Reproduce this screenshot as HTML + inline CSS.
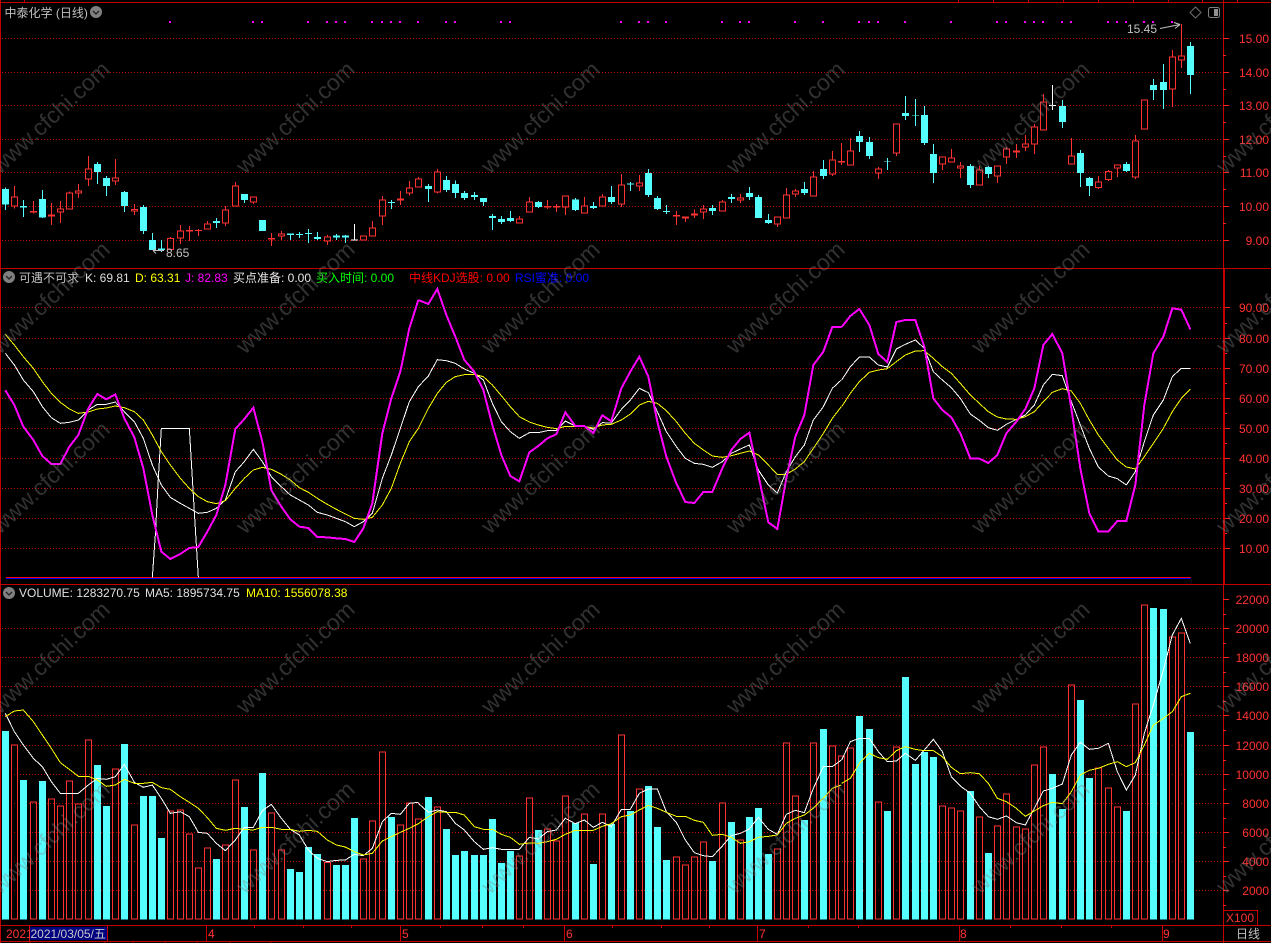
<!DOCTYPE html>
<html><head><meta charset="utf-8"><title>中泰化学</title>
<style>
html,body{margin:0;padding:0;background:#000;width:1271px;height:943px;overflow:hidden}
svg{display:block}
text{font-family:"Liberation Sans","WenQuanYi Zen Hei","Noto Sans CJK SC",sans-serif;font-size:12px}
.w text{font-size:23px}
</style></head><body>
<svg width="1271" height="943" viewBox="0 0 1271 943" xmlns="http://www.w3.org/2000/svg">
<rect width="1271" height="943" fill="#000"/>
<!-- grid -->
<path shape-rendering="crispEdges" stroke="#b80000" stroke-width="1" stroke-dasharray="1 2" fill="none" d="M2 38.5H1223M2 72.5H1223M2 105.5H1223M2 139.5H1223M2 172.5H1223M2 206.5H1223M2 240.5H1223M2 307.5H1223M2 338.5H1223M2 368.5H1223M2 398.5H1223M2 428.5H1223M2 458.5H1223M2 488.5H1223M2 518.5H1223M2 548.5H1223M2 628.5H1223M2 657.5H1223M2 686.5H1223M2 715.5H1223M2 745.5H1223M2 774.5H1223M2 803.5H1223M2 832.5H1223M2 861.5H1223M2 890.5H1223"/>
<!-- frame -->
<path shape-rendering="crispEdges" stroke="#c40000" stroke-width="1" fill="none" d="M0 2.5H1271M0 268.5H1271M0 584.5H1271M0 925.5H1271M0 941.5H1271M0.5 0V943M1223.5 0V943M24.5 0V2M958.5 0V2M993.5 0V2M1028.5 0V2M1063.5 0V2M1098.5 0V2M1133.5 0V2M1168.5 0V2M1202.5 0V2M1237.5 0V2M1224.5 269V584M29.5 926V941M107.5 926V941M206.5 926V941M400.5 926V941M564.5 926V941M757.5 926V941M959.5 926V941M1162.5 926V941M254.5 926V928M303.5 926V928M351.5 926V928M440.5 926V928M482.5 926V928M523.5 926V928M612.5 926V928M661.5 926V928M709.5 926V928M808.5 926V928M858.5 926V928M1010.5 926V928M1061.5 926V928M1111.5 926V928M1223 910.5H1257M1257.5 910V925M30 941V943M105 941V943M133 941V943M165 941V943M197 941V943M230 941V943M271 941V943"/>
<!-- axis ticks -->
<path shape-rendering="crispEdges" stroke="#ff2020" stroke-width="1" fill="none" d="M1223 38.5h6M1223 72.5h6M1223 105.5h6M1223 139.5h6M1223 172.5h6M1223 206.5h6M1223 240.5h6M1223 55.5h3M1223 89.5h3M1223 122.5h3M1223 156.5h3M1223 189.5h3M1223 223.5h3M1225 307.5h5M1225 338.5h5M1225 368.5h5M1225 398.5h5M1225 428.5h5M1225 458.5h5M1225 488.5h5M1225 518.5h5M1225 548.5h5M1225 323.5h2M1225 353.5h2M1225 383.5h2M1225 413.5h2M1225 443.5h2M1225 473.5h2M1225 503.5h2M1225 533.5h2M1223 599.5h6M1223 628.5h6M1223 657.5h6M1223 686.5h6M1223 715.5h6M1223 745.5h6M1223 774.5h6M1223 803.5h6M1223 832.5h6M1223 861.5h6M1223 890.5h6M1223 614.5h3M1223 643.5h3M1223 672.5h3M1223 701.5h3M1223 730.5h3M1223 760.5h3M1223 789.5h3M1223 818.5h3M1223 847.5h3M1223 876.5h3M1223 905.5h3"/>
<!-- signal dots -->
<path shape-rendering="crispEdges" fill="#ff00ff" d="M169 21h2v2h-2zM252 21h2v2h-2zM261 21h2v2h-2zM307 21h2v2h-2zM326 21h2v2h-2zM335 21h2v2h-2zM344 21h2v2h-2zM371 21h2v2h-2zM381 21h2v2h-2zM390 21h2v2h-2zM399 21h2v2h-2zM417 21h2v2h-2zM445 21h2v2h-2zM454 21h2v2h-2zM500 21h2v2h-2zM509 21h2v2h-2zM620 21h2v2h-2zM638 21h2v2h-2zM647 21h2v2h-2zM665 21h2v2h-2zM721 21h2v2h-2zM739 21h2v2h-2zM748 21h2v2h-2zM794 21h2v2h-2zM822 21h2v2h-2zM858 21h2v2h-2zM868 21h2v2h-2zM877 21h2v2h-2zM904 21h2v2h-2zM950 21h2v2h-2zM996 21h2v2h-2zM1005 21h2v2h-2zM1024 21h2v2h-2zM1033 21h2v2h-2zM1042 21h2v2h-2zM1061 21h2v2h-2zM1070 21h2v2h-2zM1107 21h2v2h-2zM1116 21h2v2h-2zM1125 21h2v2h-2zM1143 21h2v2h-2zM1152 21h2v2h-2zM1171 21h2v2h-2z"/>

<!-- candles panel A -->
<g transform="scale(.33333)" shape-rendering="crispEdges">
<path stroke="#55ffff" stroke-width="3" fill="none" d="M16.5 563V630M70.5 600V651M127.5 570V654M292.5 486V552M319.5 528V588M373.5 573V636M430.5 615V702M457.5 699V750M484.5 720V756M649.5 654V684M733.5 582V609M871.5 700V720M898.5 696V714M925.5 687V729M952.5 696V720M1009.5 702V720M1036.5 705V729M1174.5 600V627"/>
<path fill="#55ffff" d="M6 567h21v47h-21zM60 618h21v5h-21zM117 597h21v55h-21zM282 492h21v24h-21zM309 534h21v24h-21zM363 576h21v42h-21zM420 621h21v72h-21zM447 720h21v30h-21zM474 745h21v5h-21zM639 663h21v6h-21zM723 582h21v18h-21zM777 660h21v33h-21zM861 700h21v5h-21zM888 702h21v3h-21zM915 699h21v3h-21zM942 711h21v6h-21zM999 707h21v6h-21zM1026 707h21v6h-21zM1164 606h21v3h-21z"/>
<path stroke="#ff3232" stroke-width="3" fill="none" d="M43.5 558V589M43.5 620V626M34.5 590.5h18v28h-18zM100.5 603V640M91.5 634.5h18v2h-18zM154.5 609V643M154.5 650V675M145.5 644.5h18v4h-18zM181.5 603V625M181.5 638V669M172.5 626.5h18v10h-18zM208.5 574V577M199.5 578.5h18v49h-18zM235.5 552V571M235.5 581V594M226.5 572.5h18v7h-18zM265.5 468V505M265.5 539V558M256.5 506.5h18v31h-18zM346.5 477V532M346.5 545V555M337.5 533.5h18v10h-18zM403.5 612V627M403.5 635V645M394.5 628.5h18v5h-18zM511.5 711V714M502.5 715.5h18v33h-18zM541.5 675V691M541.5 716V732M532.5 692.5h18v22h-18zM568.5 678V723M559.5 691.5h18v2h-18zM595.5 687V708M586.5 691h18v1h-18zM622.5 663V670M613.5 671.5h18v16h-18zM676.5 618V628M676.5 671V678M667.5 629.5h18v40h-18zM706.5 546V556M697.5 557.5h18v61h-18zM760.5 608V612M751.5 590.5h18v16h-18zM814.5 699V738M805.5 715.5h18v2h-18zM844.5 693V700M844.5 710V720M835.5 701.5h18v7h-18zM982.5 705V709M982.5 725V735M973.5 710.5h18v13h-18zM1081.5 707.5h18v13h-18zM1117.5 663V682M1108.5 683.5h18v25h-18zM1147.5 588V598M1147.5 650V675M1138.5 599.5h18v49h-18zM1201.5 573V595M1201.5 602V615M1192.5 596.5h18v4h-18zM1228.5 543V562M1228.5 581V587M1219.5 563.5h18v16h-18zM1255.5 531V535M1246.5 536.5h18v25h-18z"/>
<path stroke="#fff" stroke-width="3" fill="none" d="M1063.5 672V722M1053 720.5h21"/>
</g>
<!-- candles panel B -->
<g transform="translate(420,0) scale(.33333)" shape-rendering="crispEdges">
<path stroke="#55ffff" stroke-width="3" fill="none" d="M25.5 552V606M79.5 528V576M106.5 541V594M133.5 573V600M163.5 576V600M190.5 594V618M217.5 642V690M244.5 648V672M271.5 633V666M355.5 603V624M466.5 594V633M520.5 606V627M574.5 558V612M631.5 546V573M685.5 507V591M712.5 588V630M739.5 615V642M877.5 615V645M934.5 582V609M988.5 561V600M1015.5 585V654M1045.5 642V672M1153.5 546V585M1210.5 480V537"/>
<path fill="#55ffff" d="M15 558h21v9h-21zM69 540h21v30h-21zM96 552h21v27h-21zM123 579h21v15h-21zM153 585h21v6h-21zM180 594h21v12h-21zM207 648h21v6h-21zM234 657h21v9h-21zM261 654h21v9h-21zM345 606h21v15h-21zM456 598h21v32h-21zM510 618h21v6h-21zM564 591h21v15h-21zM621 550h21v3h-21zM675 519h21v66h-21zM702 594h21v33h-21zM729 633h21v3h-21zM867 624h21v9h-21zM924 591h21v6h-21zM978 579h21v12h-21zM1005 591h21v63h-21zM1035 660h21v9h-21zM1143 567h21v12h-21zM1200 507h21v21h-21z"/>
<path stroke="#ff3232" stroke-width="3" fill="none" d="M52.5 507V514M52.5 578V581M43.5 515.5h18v61h-18zM298.5 648V655M289.5 656.5h18v12h-18zM328.5 591V604M319.5 605.5h18v31h-18zM382.5 600V627M373.5 619.5h18v2h-18zM409.5 612V636M400.5 619.5h18v2h-18zM436.5 623V645M427.5 587.5h18v34h-18zM493.5 591V616M484.5 617.5h18v22h-18zM547.5 582V589M538.5 590.5h18v28h-18zM604.5 522V553M604.5 614V621M595.5 554.5h18v58h-18zM658.5 525V547M658.5 560V573M649.5 548.5h18v10h-18zM769.5 633V675M760.5 646.5h18v2h-18zM796.5 656V666M787.5 650.5h18v4h-18zM823.5 628V640M823.5 647V654M814.5 641.5h18v4h-18zM850.5 615V625M850.5 638V657M841.5 626.5h18v10h-18zM907.5 600V604M898.5 605.5h18v28h-18zM961.5 582V592M961.5 602V609M952.5 593.5h18v7h-18zM1072.5 674V681M1063.5 650.5h18v22h-18zM1099.5 564V583M1090.5 584.5h18v70h-18zM1126.5 567V571M1126.5 584V591M1117.5 572.5h18v10h-18zM1180.5 513V529M1171.5 530.5h18v58h-18zM1237.5 453V478M1237.5 524V528M1228.5 479.5h18v43h-18zM1264.5 429V495M1255.5 484.5h18v2h-18z"/>
</g>
<!-- candles panel C -->
<g transform="translate(840,0) scale(.33333)" shape-rendering="crispEdges">
<path stroke="#55ffff" stroke-width="3" fill="none" d="M58.5 393V456M88.5 411V477M142.5 474V510M196.5 288V360M226.5 297V378M253.5 318V435M280.5 432V549M391.5 492V564M445.5 498V534M667.5 300V384M721.5 450V561M748.5 531V588M859.5 486V516M940.5 237V300M970.5 192V327M1051.5 126V282"/>
<path fill="#55ffff" d="M48 408h21v18h-21zM78 426h21v42h-21zM132 483h21v2h-21zM186 339h21v9h-21zM216 345h21v2h-21zM243 345h21v84h-21zM270 462h21v57h-21zM381 498h21v57h-21zM435 501h21v21h-21zM657 318h21v48h-21zM711 459h21v60h-21zM738 534h21v24h-21zM849 492h21v21h-21zM930 255h21v15h-21zM960 246h21v24h-21zM1041 138h21v87h-21z"/>
<path stroke="#ff3232" stroke-width="3" fill="none" d="M31.5 414V451M22.5 452.5h18v43h-18zM115.5 501V505M115.5 520V537M106.5 506.5h18v12h-18zM169.5 461V468M160.5 371.5h18v88h-18zM307.5 494V510M298.5 470.5h18v22h-18zM334.5 447V472M325.5 473.5h18v13h-18zM361.5 486V496M361.5 506V534M352.5 497.5h18v7h-18zM418.5 498V508M409.5 509.5h18v45h-18zM472.5 529V549M463.5 497.5h18v30h-18zM499.5 441V445M499.5 473V492M490.5 446.5h18v25h-18zM529.5 432V474M520.5 452.5h18v4h-18zM556.5 405V430M556.5 443V453M547.5 431.5h18v10h-18zM583.5 372V379M583.5 433V462M574.5 380.5h18v51h-18zM610.5 282V304M601.5 305.5h18v85h-18zM694.5 414V466M685.5 467.5h18v25h-18zM775.5 528V544M775.5 564V567M766.5 545.5h18v17h-18zM805.5 510V513M805.5 540V543M796.5 514.5h18v24h-18zM832.5 506V531M823.5 494.5h18v10h-18zM886.5 405V421M886.5 533V537M877.5 422.5h18v109h-18zM904.5 299.5h18v88h-18zM997.5 150V169M997.5 269V321M988.5 170.5h18v97h-18zM1024.5 72V166M1024.5 182V204M1015.5 167.5h18v13h-18z"/>
<path stroke="#fff" stroke-width="3" fill="none" d="M637.5 255V330M627 316.5h21"/>
</g>

<!-- KDJ lines -->
<g shape-rendering="crispEdges" fill="none">
<path stroke="#ff0000" stroke-width="1" d="M6 577.5H1191"/>
<path stroke="#0000ff" stroke-width="1" d="M6 578.5H1191"/>
<g transform="translate(0,265) scale(.33333)">
<polyline stroke="#fff" stroke-width="3" points="457,937 466,810 475,640 484,490 568,490 577,640 586,790 595,937"/>
<polyline stroke="#fff" stroke-width="3" points="16,265 43,300 70,345 100,380 127,425 154,458 181,475 208,472 235,465 265,435 292,418 319,418 346,411 373,440 403,470 430,520 457,600 484,660 511,697 541,715 568,730 595,745 622,742 649,730 676,705 706,620 733,590 760,553 787,590 814,635 844,665 871,690 898,705 925,720 952,742 982,750 1009,760 1036,770 1063,785 1090,770 1117,745 1147,640 1174,570 1201,490 1228,410 1255,365"/>
<polyline stroke="#ffff00" stroke-width="3" points="16,208 43,240 70,275 100,310 127,350 154,385 181,412 208,432 235,445 265,441 292,432 319,429 346,423 373,428 403,440 430,465 457,510 484,560 511,600 541,640 568,670 595,695 622,710 649,716 676,707 706,670 733,640 760,615 787,607 814,613 844,628 871,645 898,668 925,682 952,700 982,718 1009,733 1036,747 1063,760 1090,763 1117,757 1147,720 1174,670 1201,595 1228,530 1255,490"/>
<polyline stroke="#ff00ff" stroke-width="6" points="16,376 43,420 70,485 100,525 127,573 154,597 181,597 208,545 235,510 265,430 292,387 319,403 346,388 373,460 403,517 430,610 457,750 484,860 511,882 541,867 568,849 595,846 622,800 649,750 676,660 706,492 733,462 760,428 787,530 814,675 844,725 871,763 898,785 925,789 952,816 982,817 1009,820 1036,822 1063,831 1090,790 1117,715 1147,505 1174,400 1201,320 1228,190 1255,105"/>
</g>
<g transform="translate(420,265) scale(.33333)">
<polyline stroke="#fff" stroke-width="3" points="-5,365 25,333 52,284 79,287 106,295 133,312 163,325 190,345 217,415 244,470 271,500 298,520 328,503 355,503 382,497 409,496 436,468 466,483 493,483 520,493 547,473 574,474 604,433 631,405 658,370 685,383 712,440 739,500 769,545 796,580 823,595 850,598 877,607 907,590 934,565 961,552 988,540 1015,615 1045,660 1072,684 1099,620 1126,575 1153,540 1180,465 1210,425 1237,370 1264,345"/>
<polyline stroke="#ffff00" stroke-width="3" points="-5,490 25,430 52,385 79,352 106,335 133,329 163,328 190,335 217,360 244,392 271,425 298,455 328,471 355,480 382,487 409,491 436,484 466,484 493,485 520,489 547,480 574,478 604,465 631,447 658,420 685,409 712,415 739,437 769,470 796,505 823,535 850,555 877,573 907,577 934,572 961,565 988,558 1015,570 1045,600 1072,628 1099,628 1126,612 1153,590 1180,550 1210,505 1237,460 1264,425"/>
<polyline stroke="#ff00ff" stroke-width="6" points="-5,105 25,117 52,72 79,150 106,215 133,285 163,320 190,375 217,480 244,570 271,633 298,649 328,562 355,543 382,520 409,508 436,442 466,483 493,483 520,504 547,451 574,469 604,370 631,320 658,275 685,335 712,470 739,575 769,655 796,711 823,714 850,681 877,681 907,610 934,555 961,522 988,503 1015,630 1045,772 1072,792 1099,640 1126,515 1153,450 1180,300 1210,260 1237,186 1264,186"/>
</g>
<g transform="translate(840,265) scale(.33333)">
<polyline stroke="#fff" stroke-width="3" points="5,345 31,305 58,276 88,276 115,300 142,306 169,252 196,238 226,225 253,250 280,320 307,345 334,368 361,400 391,447 418,466 445,488 472,496 499,478 529,463 556,450 583,420 610,360 637,328 667,332 694,410 721,480 748,550 775,606 805,633 832,641 859,660 886,620 913,530 940,450 970,405 997,335 1024,310 1051,310"/>
<polyline stroke="#ffff00" stroke-width="3" points="5,425 31,385 58,350 88,322 115,315 142,311 169,290 196,270 226,258 253,257 280,280 307,305 334,325 361,355 391,390 418,415 445,440 472,456 499,462 529,463 556,455 583,440 610,410 637,382 667,371 694,378 721,415 748,465 775,510 805,550 832,585 859,606 886,612 913,575 940,535 970,490 997,440 1024,400 1051,372"/>
<polyline stroke="#ff00ff" stroke-width="6" points="5,186 31,153 58,132 88,180 115,267 142,291 169,171 196,165 226,165 253,245 280,400 307,435 334,457 361,505 391,580 418,581 445,594 472,570 499,505 529,470 556,432 583,370 610,240 637,207 667,265 694,430 721,610 748,745 775,800 805,800 832,768 859,768 886,660 913,420 940,265 970,215 997,130 1024,134 1051,193"/>
</g>
</g>

<!-- volume -->
<g transform="translate(0,585) scale(.33333)" shape-rendering="crispEdges" fill="none">
<path stroke="#55ffff" stroke-width="21" d="M16.5 438V1004M70.5 585V1004M127.5 588V1004M292.5 540V1004M319.5 663V1004M373.5 477V1004M430.5 633V1004M457.5 633V1004M484.5 759V1004M649.5 822V1004M733.5 666V1004M787.5 564V1004M871.5 852V1004M898.5 861V1004M925.5 786V1004M952.5 807V1004M1009.5 840V1004M1036.5 840V1004M1063.5 699V1004M1174.5 696V1004"/>
<path stroke="#ff3232" stroke-width="3" d="M34.5 479.5h18V1002.5h-18zM91.5 650.5h18V1002.5h-18zM145.5 641.5h18V1002.5h-18zM172.5 662.5h18V1002.5h-18zM199.5 587.5h18V1002.5h-18zM226.5 656.5h18V1002.5h-18zM256.5 464.5h18V1002.5h-18zM337.5 551.5h18V1002.5h-18zM394.5 719.5h18V1002.5h-18zM502.5 677.5h18V1002.5h-18zM532.5 674.5h18V1002.5h-18zM559.5 746.5h18V1002.5h-18zM586.5 848.5h18V1002.5h-18zM613.5 788.5h18V1002.5h-18zM667.5 779.5h18V1002.5h-18zM697.5 584.5h18V1002.5h-18zM751.5 794.5h18V1002.5h-18zM805.5 683.5h18V1002.5h-18zM835.5 794.5h18V1002.5h-18zM973.5 832.5h18V1002.5h-18zM1081.5 821.5h18V1002.5h-18zM1108.5 707.5h18V1002.5h-18zM1138.5 500.5h18V1002.5h-18zM1192.5 719.5h18V1002.5h-18zM1219.5 653.5h18V1002.5h-18zM1246.5 701.5h18V1002.5h-18z"/>
<polyline stroke="#fff" stroke-width="3" points="16,385 43,440 70,480 100,520 127,545 154,590 181,625 208,625 235,625 265,600 292,580 319,583 346,575 373,538 403,592 430,607 457,600 484,640 511,685 541,680 568,695 595,742 622,745 649,775 676,797 706,765 733,727 760,727 787,677 814,658 844,700 871,733 898,750 925,795 952,820 982,830 1009,826 1036,825 1063,808 1090,812 1117,790 1147,710 1174,685 1201,688 1228,655 1255,652"/>
<polyline stroke="#ffff00" stroke-width="3" points="16,395 43,378 70,375 100,410 127,450 154,490 181,533 208,553 235,574 265,574 292,585 319,604 346,600 373,583 403,595 430,595 457,592 484,608 511,613 541,635 568,652 595,670 622,698 649,730 676,736 706,730 733,733 760,735 787,727 814,727 844,733 871,733 898,739 925,736 952,739 982,765 1009,780 1036,786 1063,800 1090,810 1117,805 1147,768 1174,755 1201,742 1228,730 1255,716"/>
</g>
<g transform="translate(420,585) scale(.33333)" shape-rendering="crispEdges" fill="none">
<path stroke="#55ffff" stroke-width="21" d="M25.5 636V1004M79.5 732V1004M106.5 810V1004M133.5 798V1004M163.5 810V1004M190.5 810V1004M217.5 702V1004M244.5 834V1004M271.5 798V1004M355.5 735V1004M466.5 714V1004M520.5 837V1004M574.5 717V1004M631.5 678V1004M685.5 603V1004M712.5 726V1004M739.5 825V1004M877.5 828V1004M934.5 711V1004M988.5 696V1004M1015.5 669V1004M1045.5 807V1004M1153.5 705V1004M1210.5 432V1004"/>
<path stroke="#ff3232" stroke-width="3" d="M43.5 665.5h18V1002.5h-18zM289.5 812.5h18V1002.5h-18zM319.5 638.5h18V1002.5h-18zM373.5 731.5h18V1002.5h-18zM400.5 767.5h18V1002.5h-18zM427.5 632.5h18V1002.5h-18zM484.5 686.5h18V1002.5h-18zM538.5 686.5h18V1002.5h-18zM595.5 449.5h18V1002.5h-18zM649.5 611.5h18V1002.5h-18zM760.5 815.5h18V1002.5h-18zM787.5 839.5h18V1002.5h-18zM814.5 815.5h18V1002.5h-18zM841.5 770.5h18V1002.5h-18zM898.5 653.5h18V1002.5h-18zM952.5 764.5h18V1002.5h-18zM1063.5 791.5h18V1002.5h-18zM1090.5 473.5h18V1002.5h-18zM1117.5 632.5h18V1002.5h-18zM1171.5 473.5h18V1002.5h-18zM1228.5 482.5h18V1002.5h-18zM1255.5 512.5h18V1002.5h-18z"/>
<polyline stroke="#fff" stroke-width="3" points="-5,655 25,682 52,675 79,680 106,715 133,735 163,770 190,793 217,788 244,793 271,793 298,793 328,757 355,762 382,740 409,735 436,700 466,716 493,705 520,727 547,712 574,725 604,673 631,673 658,625 685,612 712,612 739,680 769,712 796,765 823,803 850,812 877,815 907,783 934,752 961,745 988,732 1015,697 1045,733 1072,748 1099,688 1126,676 1153,683 1180,610 1210,545 1237,545 1264,525"/>
<polyline stroke="#ffff00" stroke-width="3" points="-5,716 25,695 52,680 79,682 106,682 133,690 163,725 190,733 217,733 244,748 271,757 298,778 328,774 355,775 382,770 409,763 436,748 466,736 493,736 520,736 547,724 574,716 604,695 631,690 658,675 685,661 712,670 739,682 769,694 796,694 823,706 850,712 877,751 907,748 934,757 961,775 988,770 1015,757 1045,754 1072,750 1099,715 1126,700 1153,690 1180,670 1210,640 1237,610 1264,600"/>
</g>
<g transform="translate(840,585) scale(.33333)" shape-rendering="crispEdges" fill="none">
<path stroke="#55ffff" stroke-width="21" d="M58.5 393V1004M88.5 432V1004M142.5 678V1004M196.5 276V1004M226.5 537V1004M253.5 501V1004M280.5 516V1004M391.5 618V1004M445.5 804V1004M637.5 567V1004M667.5 672V1004M721.5 345V1004M748.5 579V1004M859.5 678V1004M940.5 69V1004M970.5 72V1004M1051.5 441V1004"/>
<path stroke="#ff3232" stroke-width="3" d="M22.5 488.5h18V1002.5h-18zM106.5 651.5h18V1002.5h-18zM160.5 485.5h18V1002.5h-18zM298.5 662.5h18V1002.5h-18zM325.5 668.5h18V1002.5h-18zM352.5 677.5h18V1002.5h-18zM409.5 695.5h18V1002.5h-18zM463.5 722.5h18V1002.5h-18zM490.5 626.5h18V1002.5h-18zM520.5 725.5h18V1002.5h-18zM547.5 731.5h18V1002.5h-18zM574.5 539.5h18V1002.5h-18zM601.5 485.5h18V1002.5h-18zM685.5 299.5h18V1002.5h-18zM766.5 548.5h18V1002.5h-18zM796.5 608.5h18V1002.5h-18zM823.5 665.5h18V1002.5h-18zM877.5 356.5h18V1002.5h-18zM904.5 59.5h18V1002.5h-18zM988.5 155.5h18V1002.5h-18zM1015.5 143.5h18V1002.5h-18z"/>
<polyline stroke="#fff" stroke-width="3" points="5,525 31,470 58,460 88,460 115,500 142,530 169,528 196,505 226,526 253,495 280,463 307,500 334,575 361,603 391,625 418,665 445,695 472,703 499,693 529,713 556,720 583,670 610,618 637,610 667,597 694,510 721,472 748,493 775,490 805,475 832,560 859,615 886,570 913,445 940,360 970,255 997,150 1024,100 1051,176"/>
<polyline stroke="#ffff00" stroke-width="3" points="5,595 31,580 58,535 88,505 115,518 142,523 169,497 196,485 226,493 253,497 280,497 307,515 334,547 361,566 391,563 418,566 445,595 472,640 499,650 529,670 556,694 583,678 610,662 637,652 667,656 694,620 721,570 748,556 775,550 805,538 832,530 859,545 886,533 913,480 940,420 970,400 997,380 1024,335 1051,325"/>
</g>

<!-- annotations -->
<text x="166" y="257" fill="#c0c0c0">8.65</text>
<path fill="none" stroke="#c0c0c0" d="M164 250.5H153M153 250.5l3-2M153 250.5l3 3"/>
<text x="1127" y="33" fill="#c0c0c0">15.45</text>
<path fill="none" stroke="#c0c0c0" d="M1160 28.5l20-4M1180 24.5l-6-2M1180 24.5l-5 4"/>

<!-- legends -->
<text x="4.5" y="17" fill="#c0c0c0">中泰化学 (日线)</text>
<circle cx="96" cy="12" r="6" fill="#808080"/><path d="M93 11l3 3 3-3" fill="none" stroke="#222" stroke-width="1.3"/>
<path d="M1195.5 7l5.5 5.5-5.5 5.5-5.5-5.5z" fill="none" stroke="#707070"/>
<rect x="1208.5" y="7.5" width="11" height="10" rx="2" fill="none" stroke="#808080"/><rect x="1214" y="9" width="4" height="7" fill="#909090"/>

<circle cx="9" cy="277" r="6" fill="#808080"/><path d="M6 276l3 3 3-3" fill="none" stroke="#222" stroke-width="1.3"/>
<text x="19" y="282" fill="#c0c0c0">可遇不可求</text>
<text x="85" y="282" fill="#dcdcdc">K: 69.81</text>
<text x="135" y="282" fill="#ffff00">D: 63.31</text>
<text x="185" y="282" fill="#ff00ff">J: 82.83</text>
<text x="233" y="282" fill="#e6e6e6">买点准备: 0.00</text>
<text x="316" y="282" fill="#00ff00">买入时间: 0.00</text>
<text x="409" y="282" fill="#ff0000">中线KDJ选股: 0.00</text>
<text x="515" y="282" fill="#0000ff">RSI蜜准: 0.00</text>

<circle cx="9" cy="593" r="6" fill="#808080"/><path d="M6 592l3 3 3-3" fill="none" stroke="#222" stroke-width="1.3"/>
<text x="19" y="597" fill="#e0e0e0">VOLUME: 1283270.75</text>
<text x="145" y="597" fill="#e0e0e0">MA5: 1895734.75</text>
<text x="246" y="597" fill="#ffff00">MA10: 1556078.38</text>

<!-- axis labels -->
<g fill="#ff3232" text-anchor="end">
<text x="1269" y="43">15.00</text><text x="1269" y="77">14.00</text><text x="1269" y="110">13.00</text><text x="1269" y="144">12.00</text><text x="1269" y="177">11.00</text><text x="1269" y="211">10.00</text><text x="1269" y="245">9.00</text>
<text x="1269" y="312">90.00</text><text x="1269" y="343">80.00</text><text x="1269" y="373">70.00</text><text x="1269" y="403">60.00</text><text x="1269" y="433">50.00</text><text x="1269" y="463">40.00</text><text x="1269" y="493">30.00</text><text x="1269" y="523">20.00</text><text x="1269" y="553">10.00</text>
<text x="1269" y="604">22000</text><text x="1269" y="633">20000</text><text x="1269" y="662">18000</text><text x="1269" y="691">16000</text><text x="1269" y="720">14000</text><text x="1269" y="750">12000</text><text x="1269" y="779">10000</text><text x="1269" y="808">8000</text><text x="1269" y="837">6000</text><text x="1269" y="866">4000</text><text x="1269" y="895">2000</text>
</g>
<text x="1226" y="922" fill="#ff3232">X100</text>
<text x="1236" y="938" fill="#c0c0c0">日线</text>

<!-- date axis -->
<text x="6" y="938" fill="#ff3232">2021</text>
<rect x="30" y="927" width="77" height="13" fill="#000080"/>
<text x="30.5" y="938" fill="#c8c8c8">2021/03/05/五</text>
<g fill="#ff3232">
<text x="208" y="938">4</text><text x="402" y="938">5</text><text x="566" y="938">6</text><text x="759" y="938">7</text><text x="960" y="938">8</text><text x="1163" y="938">9</text>
</g>

<!-- watermark -->
<g class="w" fill="#808080" fill-opacity=".38">
<text transform="translate(0,175) rotate(-43)">www.cfchi.com</text><text transform="translate(245,175) rotate(-43)">www.cfchi.com</text><text transform="translate(490,175) rotate(-43)">www.cfchi.com</text><text transform="translate(735,175) rotate(-43)">www.cfchi.com</text><text transform="translate(980,175) rotate(-43)">www.cfchi.com</text><text transform="translate(1225,175) rotate(-43)">www.cfchi.com</text>
<text transform="translate(0,355) rotate(-43)">www.cfchi.com</text><text transform="translate(245,355) rotate(-43)">www.cfchi.com</text><text transform="translate(490,355) rotate(-43)">www.cfchi.com</text><text transform="translate(735,355) rotate(-43)">www.cfchi.com</text><text transform="translate(980,355) rotate(-43)">www.cfchi.com</text><text transform="translate(1225,355) rotate(-43)">www.cfchi.com</text>
<text transform="translate(0,535) rotate(-43)">www.cfchi.com</text><text transform="translate(245,535) rotate(-43)">www.cfchi.com</text><text transform="translate(490,535) rotate(-43)">www.cfchi.com</text><text transform="translate(735,535) rotate(-43)">www.cfchi.com</text><text transform="translate(980,535) rotate(-43)">www.cfchi.com</text><text transform="translate(1225,535) rotate(-43)">www.cfchi.com</text>
<text transform="translate(0,715) rotate(-43)">www.cfchi.com</text><text transform="translate(245,715) rotate(-43)">www.cfchi.com</text><text transform="translate(490,715) rotate(-43)">www.cfchi.com</text><text transform="translate(735,715) rotate(-43)">www.cfchi.com</text><text transform="translate(980,715) rotate(-43)">www.cfchi.com</text><text transform="translate(1225,715) rotate(-43)">www.cfchi.com</text>
<text transform="translate(0,895) rotate(-43)">www.cfchi.com</text><text transform="translate(245,895) rotate(-43)">www.cfchi.com</text><text transform="translate(490,895) rotate(-43)">www.cfchi.com</text><text transform="translate(735,895) rotate(-43)">www.cfchi.com</text><text transform="translate(980,895) rotate(-43)">www.cfchi.com</text><text transform="translate(1225,895) rotate(-43)">www.cfchi.com</text>
</g>
</svg>
</body></html>
